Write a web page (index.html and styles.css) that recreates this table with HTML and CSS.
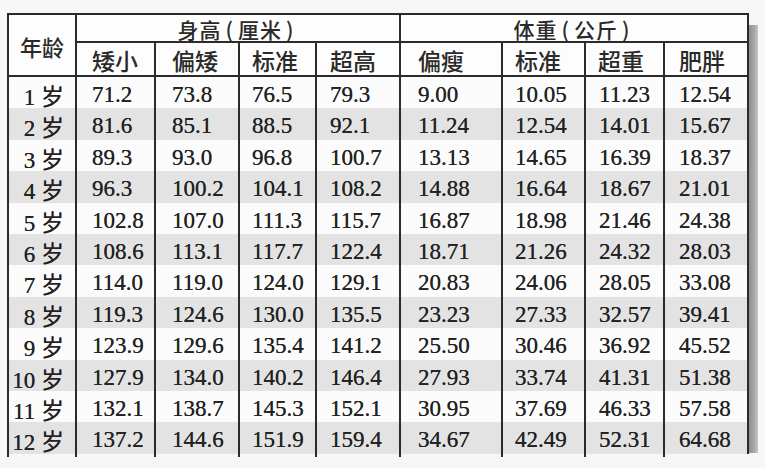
FILE: index.html
```html
<!DOCTYPE html>
<html lang="zh-CN">
<head>
<meta charset="utf-8">
<title>儿童身高体重标准表</title>
<link rel="stylesheet" href="styles.css">
</head>
<body>
<div class="sheet">
  <div class="chart">
    <div class="head">
      <div class="age-h">年龄</div>
      <div class="grp grp-h">身高<span class="paren">(</span>厘米<span class="paren">)</span></div>
      <div class="grp grp-w">体重<span class="paren">(</span>公斤<span class="paren">)</span></div>
      <div class="lab c2">矮小</div>
      <div class="lab c3">偏矮</div>
      <div class="lab c4">标准</div>
      <div class="lab c5">超高</div>
      <div class="lab c6">偏瘦</div>
      <div class="lab c7">标准</div>
      <div class="lab c8">超重</div>
      <div class="lab c9">肥胖</div>
    </div>
    <div class="row"><div>1 岁</div><div>71.2</div><div>73.8</div><div>76.5</div><div>79.3</div><div>9.00</div><div>10.05</div><div>11.23</div><div>12.54</div></div>
    <div class="row"><div>2 岁</div><div>81.6</div><div>85.1</div><div>88.5</div><div>92.1</div><div>11.24</div><div>12.54</div><div>14.01</div><div>15.67</div></div>
    <div class="row"><div>3 岁</div><div>89.3</div><div>93.0</div><div>96.8</div><div>100.7</div><div>13.13</div><div>14.65</div><div>16.39</div><div>18.37</div></div>
    <div class="row"><div>4 岁</div><div>96.3</div><div>100.2</div><div>104.1</div><div>108.2</div><div>14.88</div><div>16.64</div><div>18.67</div><div>21.01</div></div>
    <div class="row"><div>5 岁</div><div>102.8</div><div>107.0</div><div>111.3</div><div>115.7</div><div>16.87</div><div>18.98</div><div>21.46</div><div>24.38</div></div>
    <div class="row"><div>6 岁</div><div>108.6</div><div>113.1</div><div>117.7</div><div>122.4</div><div>18.71</div><div>21.26</div><div>24.32</div><div>28.03</div></div>
    <div class="row"><div>7 岁</div><div>114.0</div><div>119.0</div><div>124.0</div><div>129.1</div><div>20.83</div><div>24.06</div><div>28.05</div><div>33.08</div></div>
    <div class="row"><div>8 岁</div><div>119.3</div><div>124.6</div><div>130.0</div><div>135.5</div><div>23.23</div><div>27.33</div><div>32.57</div><div>39.41</div></div>
    <div class="row"><div>9 岁</div><div>123.9</div><div>129.6</div><div>135.4</div><div>141.2</div><div>25.50</div><div>30.46</div><div>36.92</div><div>45.52</div></div>
    <div class="row"><div>10 岁</div><div>127.9</div><div>134.0</div><div>140.2</div><div>146.4</div><div>27.93</div><div>33.74</div><div>41.31</div><div>51.38</div></div>
    <div class="row"><div>11 岁</div><div>132.1</div><div>138.7</div><div>145.3</div><div>152.1</div><div>30.95</div><div>37.69</div><div>46.33</div><div>57.58</div></div>
    <div class="row"><div>12 岁</div><div>137.2</div><div>144.6</div><div>151.9</div><div>159.4</div><div>34.67</div><div>42.49</div><div>52.31</div><div>64.68</div></div>
  </div>
  <div class="shade"></div>
</div>
</body>
</html>
```
FILE: styles.css
```css
html, body {
  margin: 0;
  padding: 0;
}
body {
  background: #f7f7f7;
  width: 765px;
  height: 468px;
  overflow: hidden;
  color: #222;
}
.sheet {
  display: flex;
  align-items: flex-start;
  padding: 13px 0 0 7px;
}
.chart {
  width: 742px;
  box-sizing: border-box;
  border-top: 2px solid #2b2b2b;
  border-right: 2px solid #2b2b2b;
  background: #fbfbfb;
}
.shade {
  width: 9px;
  height: 428px;
  margin-top: 12px;
  background: linear-gradient(to right, #8f8f8f, #a9a9a9 60%, #c8c8c8);
}
.head,
.row {
  display: grid;
  grid-template-columns: 68px 79px 84px 77px 84px 102px 83px 79px 84px;
}
.head {
  grid-template-rows: 28px 34px;
  font-family: "Noto Sans CJK SC", sans-serif;
  font-weight: 500;
  color: #2a2a2a;
  background: #fdfdfd;
}
.head > div {
  box-sizing: border-box;
  border-left: 2px solid #2b2b2b;
  border-bottom: 2px solid #2b2b2b;
  display: flex;
  align-items: center;
  white-space: nowrap;
}
.age-h {
  grid-row: 1 / span 2;
  grid-column: 1;
  justify-content: center;
  font-size: 22px;
  padding-top: 2px;
}
.grp {
  grid-row: 1;
  justify-content: center;
  font-size: 21px;
  letter-spacing: 1px;
  padding-top: 2px;
}
.paren {
  padding: 0 4px;
}
.grp-h { grid-column: 2 / span 4; }
.grp-w { grid-column: 6 / span 4; }
.lab {
  grid-row: 2;
  font-size: 23px;
  padding-top: 2px;
}
.lab.c2 { padding-left: 15px; }
.lab.c3 { padding-left: 16px; }
.lab.c4 { padding-left: 12px; }
.lab.c5 { padding-left: 13px; }
.lab.c6 { padding-left: 17px; }
.lab.c7 { padding-left: 12px; }
.lab.c8 { padding-left: 12px; }
.lab.c9 { padding-left: 14px; }

.row {
  height: 31.4px;
  font-family: "Liberation Serif", "Noto Sans CJK SC", serif;
  font-size: 23px;
  background: #fbfbfb;
  text-shadow: 0 0 0.6px #333;
}
.row:nth-child(odd) {
  background: #e3e3e3;
}
.row > div {
  box-sizing: border-box;
  border-left: 2px solid #2b2b2b;
  display: flex;
  align-items: center;
  white-space: nowrap;
  padding-top: 1px;
}
.row > div:nth-child(1) {
  justify-content: flex-end;
  padding-right: 11px;
}
.row > div:nth-child(2) { padding-left: 15px; }
.row > div:nth-child(3) { padding-left: 16px; }
.row > div:nth-child(4) { padding-left: 12px; }
.row > div:nth-child(5) { padding-left: 13px; }
.row > div:nth-child(6) { padding-left: 17px; }
.row > div:nth-child(7) { padding-left: 12px; }
.row > div:nth-child(8) { padding-left: 13px; }
.row > div:nth-child(9) { padding-left: 14px; }
```
